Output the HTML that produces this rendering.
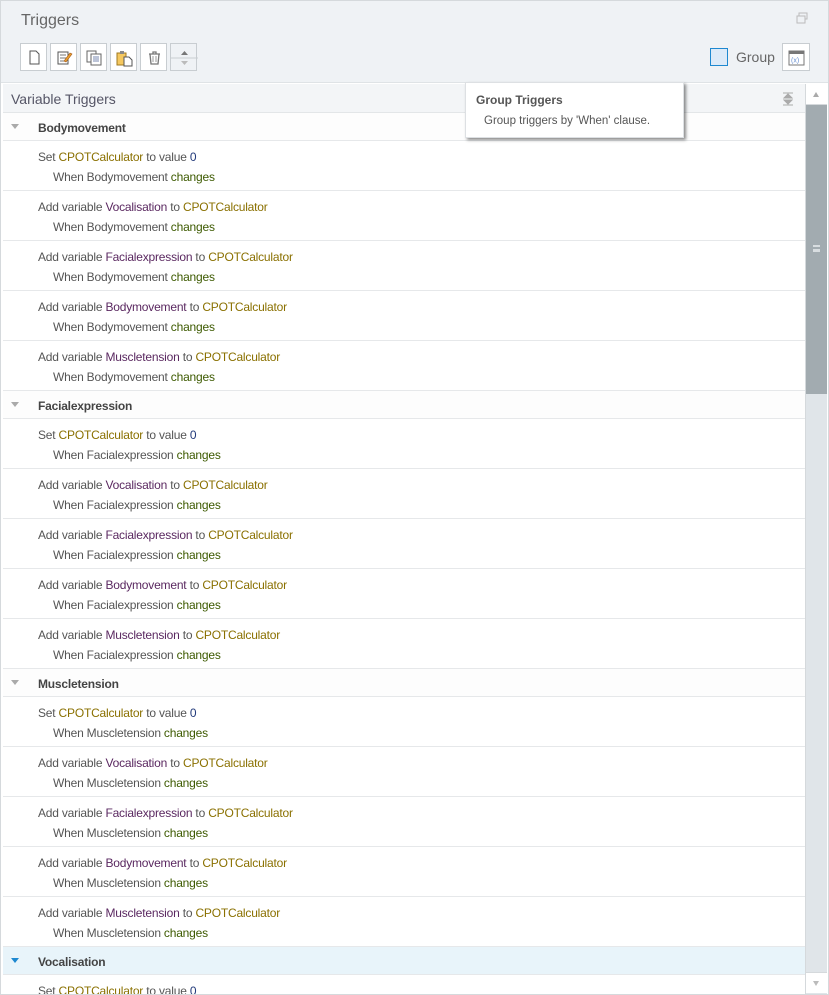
<!DOCTYPE html>
<html><head><style>
*{margin:0;padding:0;box-sizing:border-box}
body{width:829px;height:995px;overflow:hidden;background:#fff;font-family:"Liberation Sans",sans-serif;color:#555;position:relative}
.frame{position:absolute;left:0;top:0;width:829px;height:995px;border:1px solid #d5d9dc}
.head{position:absolute;left:1px;top:1px;width:827px;height:82px;background:#eff2f5;border-bottom:1px solid #dfe3e6}
.title{position:absolute;left:20px;top:11px;font-size:16px;color:#666}
.btn{position:absolute;top:43px;width:27px;height:28px;border:1px solid #c8cdd1;background:#fff}
.list{position:absolute;left:3px;top:84px;width:802px;height:910px;overflow:hidden}
.vh{height:29px;background:#f3f5f7;border-bottom:1px solid #e3e6e8;font-size:14px;color:#556;padding:7px 0 0 8px;position:relative}
.grp{height:28px;border-bottom:1px solid #e6e8ea;font-size:12px;font-weight:bold;color:#444;padding:8px 0 0 35px;position:relative;letter-spacing:-0.2px;background:#fdfdfd}
.grp:before{content:"";position:absolute;left:8px;top:11px;border-left:4px solid transparent;border-right:4px solid transparent;border-top:5px solid #aaa}
.grp.sel{background:#e8f4fa}
.grp.sel:before{border-top-color:#1e88d0}
.it{height:50px;border-bottom:1px solid #e6e8ea;font-size:12px;letter-spacing:-0.2px;padding:6px 0 0 35px;line-height:20px}
.it div+div{padding-left:15px}
.c{color:#8a7000}.v{color:#5a2860}.n{color:#223a7a}.g{color:#3d5a00}
.sb{position:absolute;left:805px;top:84px;width:22px;height:910px;background:#e0e5e9;border-left:1px solid #d5d9dc}
</style></head><body>
<div class="frame"></div>
<div class="head">
<div class="title">Triggers</div>
<svg style="position:absolute;left:795px;top:11px" width="12" height="12"><rect x="3" y="1" width="8" height="6" fill="none" stroke="#bbb"/><rect x="1" y="4" width="8" height="7" fill="#eff2f5" stroke="#bbb"/></svg>
</div>
<div class="btn" style="left:20px"><svg width="27" height="28"><path d="M9 7h6l3 3v10H9z" fill="#fff" stroke="#555"/></svg></div>
<div class="btn" style="left:50px"><svg width="27" height="28"><rect x="7" y="8" width="10" height="12" fill="#fff" stroke="#555"/><path d="M9 11h6M9 14h6M9 17h5" stroke="#777"/><path d="M13 17l6-8 2 1-6 8z" fill="#e8a030" stroke="#a05010" stroke-width=".6"/></svg></div>
<div class="btn" style="left:80px"><svg width="27" height="28"><rect x="6" y="7" width="9" height="11" fill="#fff" stroke="#666"/><rect x="10" y="10" width="10" height="11" fill="#fff" stroke="#666"/><path d="M12 13h6M12 15h6M12 17h6" stroke="#7a8ab0"/></svg></div>
<div class="btn" style="left:110px"><svg width="27" height="28"><rect x="6" y="9" width="9" height="12" fill="#f5c860" stroke="#a07a20"/><rect x="9" y="7" width="4" height="3" fill="#888"/><path d="M13 13h5l3 3v6h-8z" fill="#fff" stroke="#555"/></svg></div>
<div class="btn" style="left:140px"><svg width="27" height="28"><path d="M8 10h11M12 10V8h3v2M9 10l1 10h7l1-10" fill="none" stroke="#777" stroke-width="1.3"/><path d="M12 12v6M15 12v6" stroke="#999"/></svg></div>
<div class="btn" style="left:170px;background:#eff2f5"><svg width="27" height="28"><path d="M10 11l3.5-4 3.5 4z" fill="#777"/><path d="M0 14h27" stroke="#c8cdd1"/><path d="M10 17l3.5 4 3.5-4z" fill="#bbb"/></svg></div>
<div style="position:absolute;left:710px;top:48px;width:18px;height:18px;border:1px solid #1e88d0;background:#dceaf8"></div>
<div style="position:absolute;left:736px;top:49px;font-size:14px;color:#666">Group</div>
<div class="btn" style="left:782px;top:43px;width:28px"><svg width="27" height="28"><rect x="6" y="7" width="15" height="14" fill="#fff" stroke="#777"/><rect x="6" y="7" width="15" height="3" fill="#777"/><text x="8" y="18.5" font-size="7" fill="#6a90d0" font-family="Liberation Sans">(x)</text></svg></div>
<div class="list">
<div class="vh">Variable Triggers<svg style="position:absolute;left:780px;top:8px" width="10" height="14"><path d="M0 1h10M0 13h10M5 2l-4 4h8zM5 12l-4-4h8z" stroke="#aaa" fill="#aaa"/></svg></div>
<div class="grp">Bodymovement</div>
<div class="it"><div>Set <span class="c">CPOTCalculator</span> to value <span class="n">0</span></div><div>When Bodymovement <span class="g">changes</span></div></div>
<div class="it"><div>Add variable <span class="v">Vocalisation</span> to <span class="c">CPOTCalculator</span></div><div>When Bodymovement <span class="g">changes</span></div></div>
<div class="it"><div>Add variable <span class="v">Facialexpression</span> to <span class="c">CPOTCalculator</span></div><div>When Bodymovement <span class="g">changes</span></div></div>
<div class="it"><div>Add variable <span class="v">Bodymovement</span> to <span class="c">CPOTCalculator</span></div><div>When Bodymovement <span class="g">changes</span></div></div>
<div class="it"><div>Add variable <span class="v">Muscletension</span> to <span class="c">CPOTCalculator</span></div><div>When Bodymovement <span class="g">changes</span></div></div>
<div class="grp">Facialexpression</div>
<div class="it"><div>Set <span class="c">CPOTCalculator</span> to value <span class="n">0</span></div><div>When Facialexpression <span class="g">changes</span></div></div>
<div class="it"><div>Add variable <span class="v">Vocalisation</span> to <span class="c">CPOTCalculator</span></div><div>When Facialexpression <span class="g">changes</span></div></div>
<div class="it"><div>Add variable <span class="v">Facialexpression</span> to <span class="c">CPOTCalculator</span></div><div>When Facialexpression <span class="g">changes</span></div></div>
<div class="it"><div>Add variable <span class="v">Bodymovement</span> to <span class="c">CPOTCalculator</span></div><div>When Facialexpression <span class="g">changes</span></div></div>
<div class="it"><div>Add variable <span class="v">Muscletension</span> to <span class="c">CPOTCalculator</span></div><div>When Facialexpression <span class="g">changes</span></div></div>
<div class="grp">Muscletension</div>
<div class="it"><div>Set <span class="c">CPOTCalculator</span> to value <span class="n">0</span></div><div>When Muscletension <span class="g">changes</span></div></div>
<div class="it"><div>Add variable <span class="v">Vocalisation</span> to <span class="c">CPOTCalculator</span></div><div>When Muscletension <span class="g">changes</span></div></div>
<div class="it"><div>Add variable <span class="v">Facialexpression</span> to <span class="c">CPOTCalculator</span></div><div>When Muscletension <span class="g">changes</span></div></div>
<div class="it"><div>Add variable <span class="v">Bodymovement</span> to <span class="c">CPOTCalculator</span></div><div>When Muscletension <span class="g">changes</span></div></div>
<div class="it"><div>Add variable <span class="v">Muscletension</span> to <span class="c">CPOTCalculator</span></div><div>When Muscletension <span class="g">changes</span></div></div>
<div class="grp sel">Vocalisation</div>
<div class="it"><div>Set <span class="c">CPOTCalculator</span> to value <span class="n">0</span></div></div>
</div>
<div class="sb">
<div style="position:absolute;left:0;top:0;width:21px;height:21px;background:#fff;border-bottom:1px solid #d5d9dc"><div style="position:absolute;left:7px;top:8px;border-left:3px solid transparent;border-right:3px solid transparent;border-bottom:5px solid #aaa"></div></div>
<div style="position:absolute;left:0;top:21px;width:21px;height:289px;background:#a2abb0"><div style="position:absolute;left:7px;top:140px;width:7px;height:7px;border-top:2px solid #d8dde0;border-bottom:2px solid #d8dde0"><div style="margin-top:1.5px;height:1px;background:#d8dde0"></div></div></div>
<div style="position:absolute;left:0;top:888px;width:21px;height:21px;background:#fff;border-top:1px solid #d5d9dc"><div style="position:absolute;left:7px;top:8px;border-left:3px solid transparent;border-right:3px solid transparent;border-top:5px solid #bbb"></div></div>
</div>
<div style="position:absolute;left:465px;top:82px;width:219px;height:56px;background:#fff;border:1px solid #dde0e3;box-shadow:2px 2px 3px rgba(0,0,0,.45)">
<div style="position:absolute;left:10px;top:10px;font-size:12px;font-weight:bold;color:#555">Group Triggers</div>
<div style="position:absolute;left:18px;top:32px;font-size:11.5px;color:#555">Group triggers by 'When' clause.</div>
</div>
</body></html>
